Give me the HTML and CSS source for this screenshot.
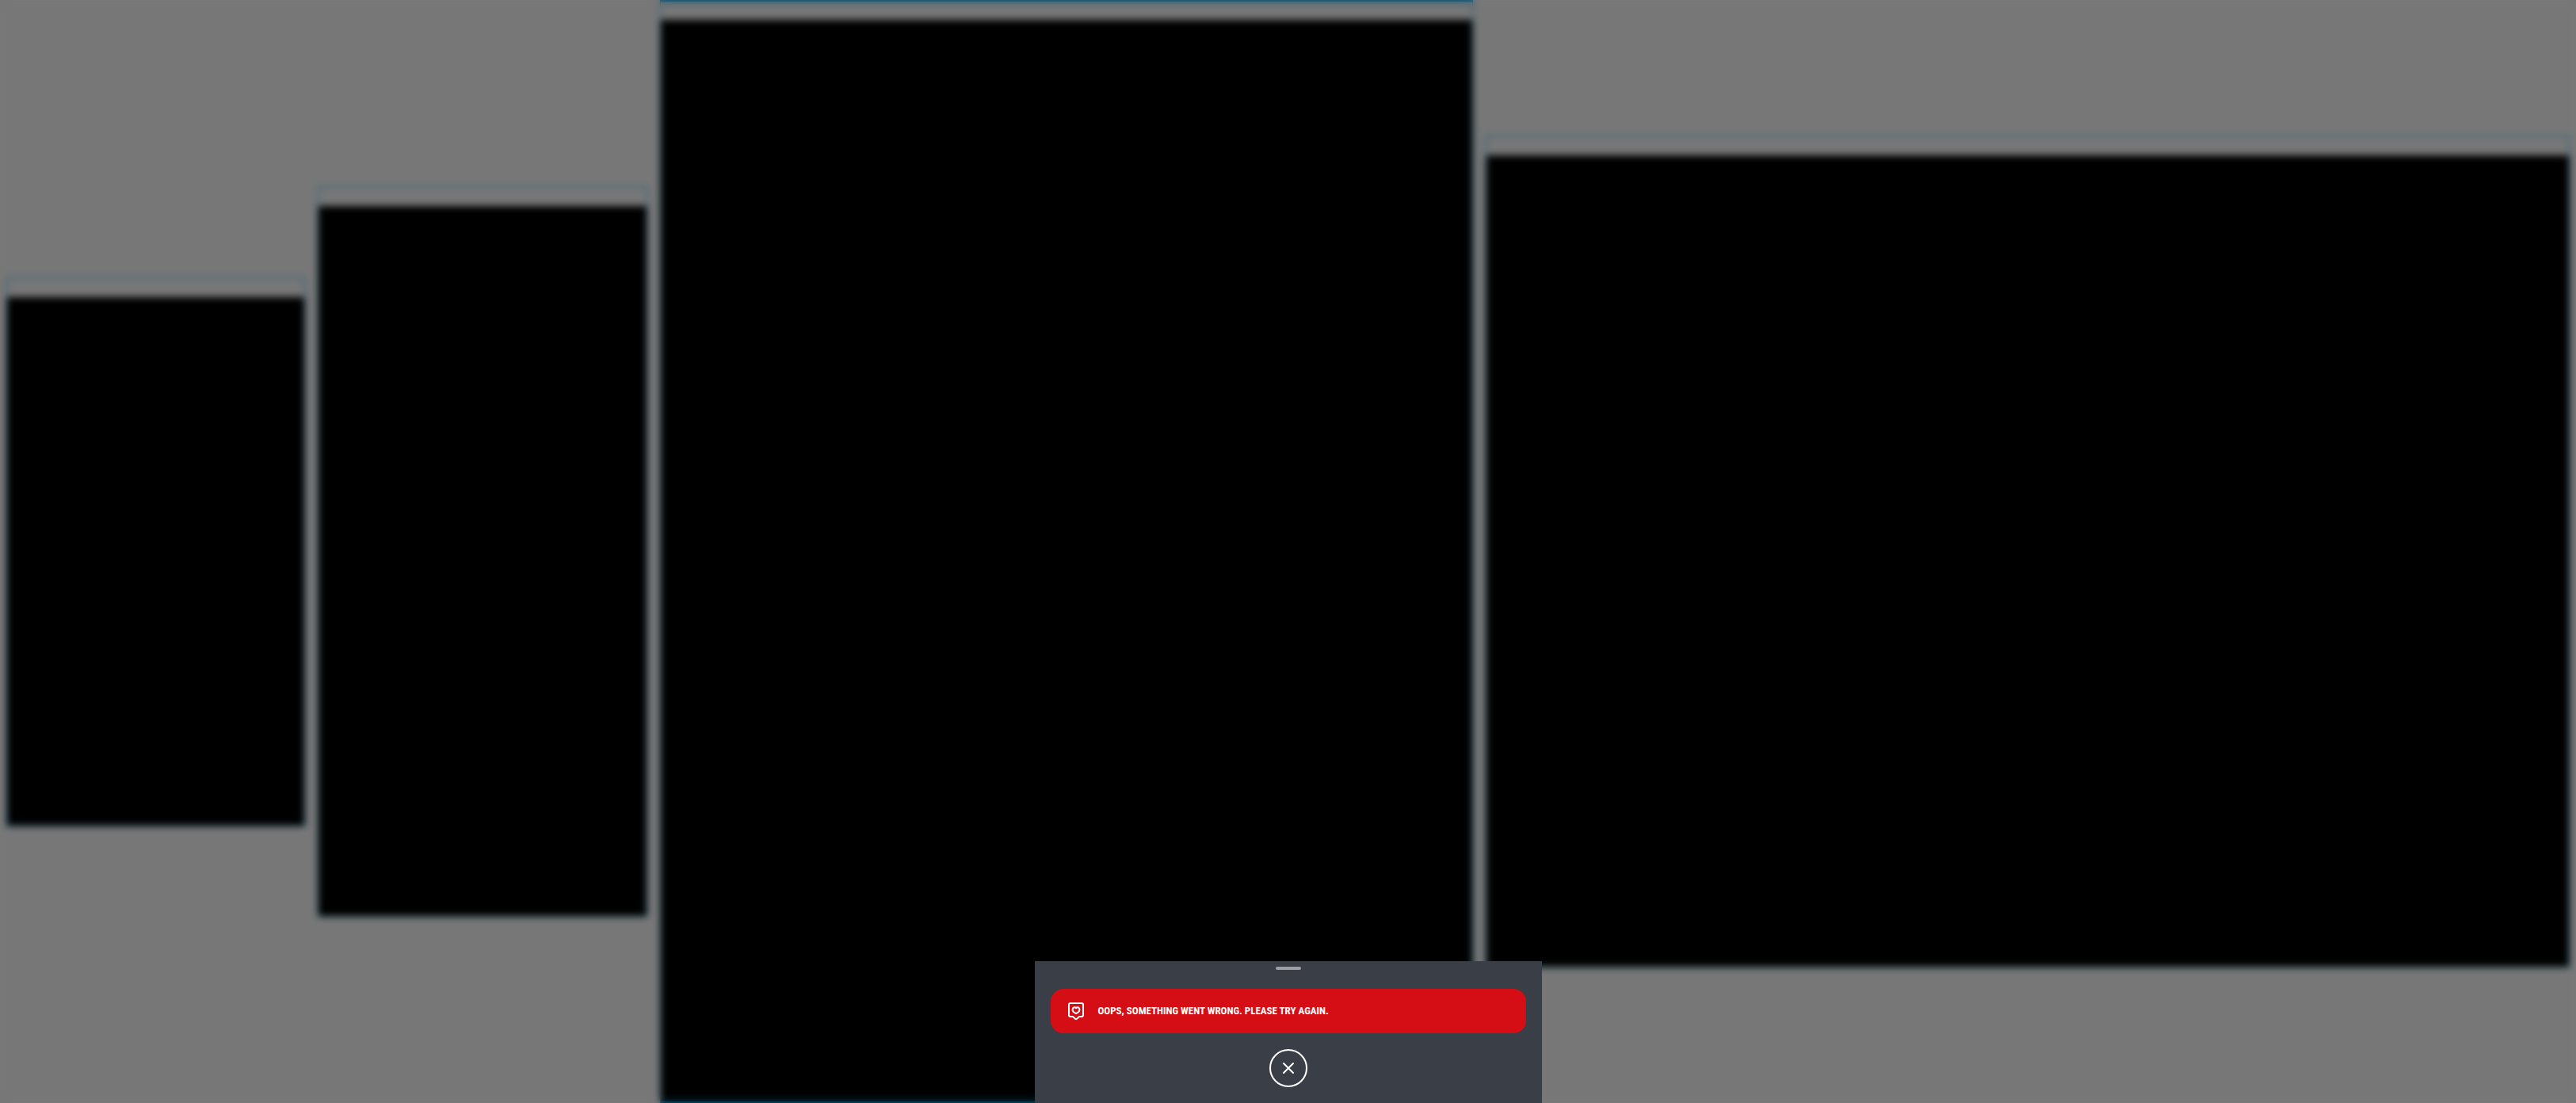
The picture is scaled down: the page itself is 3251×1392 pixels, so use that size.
FILE: index.html
```html
<!DOCTYPE html>
<html lang="en">
<head>
  <meta charset="utf-8">
  <meta name="viewport" content="width=device-width, initial-scale=1">
  <title>Device preview</title>
  <link rel="stylesheet" href="styles.css">
</head>
<body>
  <main class="devices">
    <section class="device"><div class="screen screen-phone"></div></section>
    <section class="device"><div class="screen screen-phone-large"></div></section>
    <section class="device device-active"><div class="screen screen-tablet"></div></section>
    <section class="device"><div class="screen screen-tablet-wide"></div></section>
  </main>
  <div class="backdrop">
    <div class="sheet" role="dialog" aria-label="Error">
      <div class="handle"></div>
      <div class="alert" role="alert">
        <svg class="alert-icon" viewBox="0 0 24 24" aria-hidden="true">
          <path d="M5 2H19Q21 2 21 4V17Q21 19 19 19H16L13 21.7Q12 22.5 11 21.7L8 19H5Q3 19 3 17V4Q3 2 5 2Z"/>
          <path d="M12 8.3C10.7 6.8 7.6 7 7.6 10C7.6 12.4 10.1 14.3 12 15C13.9 14.3 16.4 12.4 16.4 10C16.4 7 13.3 6.8 12 8.3Z"/>
        </svg>
        <p class="alert-text">OOPS, SOMETHING WENT WRONG. PLEASE TRY AGAIN.</p>
      </div>
      <button class="close" type="button" aria-label="Close">
        <svg class="close-icon" viewBox="0 0 24 24" aria-hidden="true"><path d="M6 6L18 18M18 6L6 18"/></svg>
      </button>
    </div>
  </div>
</body>
</html>
```
FILE: styles.css
```css
* {
  box-sizing: border-box;
}

body {
  margin: 0;
  background: #efefef;
  font-family: "Roboto Condensed", "Liberation Sans Narrow", Roboto, sans-serif;
}

.devices {
  display: grid;
  grid-template-columns: 377fr 416fr 1026fr 1368fr;
  gap: 16px;
  align-items: center;
  min-height: 100vh;
  padding: 0 8px;
}

.device {
  padding-top: 24px;
  border: 1px solid #00a2ea;
}

.device-active {
  padding-top: 22px;
  border-top-width: 3px;
}

.screen {
  background: #000;
}

.screen-phone {
  aspect-ratio: 375 / 667;
}

.screen-phone-large {
  aspect-ratio: 414 / 896;
}

.screen-tablet {
  aspect-ratio: 1024 / 1366;
  border-bottom: 2px solid #00a2ea;
}

.screen-tablet-wide {
  aspect-ratio: 1366 / 1024;
}

.backdrop {
  position: fixed;
  inset: 0;
  display: flex;
  align-items: flex-end;
  justify-content: center;
  background: rgba(0, 0, 0, 0.5);
  backdrop-filter: blur(5px);
}

.sheet {
  display: flex;
  flex-direction: column;
  align-items: center;
  width: 100%;
  max-width: 640px;
  padding: 7px 20px 20px;
  background: #3a3e46;
}

.handle {
  width: 32px;
  height: 4px;
  margin-bottom: 24px;
  border-radius: 2px;
  background: #9d9fa5;
}

.alert {
  display: flex;
  align-items: center;
  gap: 16px;
  width: 100%;
  min-height: 56px;
  margin-bottom: 20px;
  padding: 0 20px;
  border-radius: 16px;
  background: #d50d14;
  color: #fff;
}

.alert-icon,
.close-icon {
  width: 24px;
  height: 24px;
  flex: none;
  fill: none;
  stroke: #fff;
  stroke-width: 2;
  stroke-linecap: round;
  stroke-linejoin: round;
}

.alert-text {
  margin: 0;
  font-size: 13px;
  font-weight: 700;
  line-height: 20px;
}

.close {
  display: flex;
  align-items: center;
  justify-content: center;
  width: 48px;
  height: 48px;
  padding: 0;
  border: 2px solid #fff;
  border-radius: 50%;
  background: transparent;
}
```
